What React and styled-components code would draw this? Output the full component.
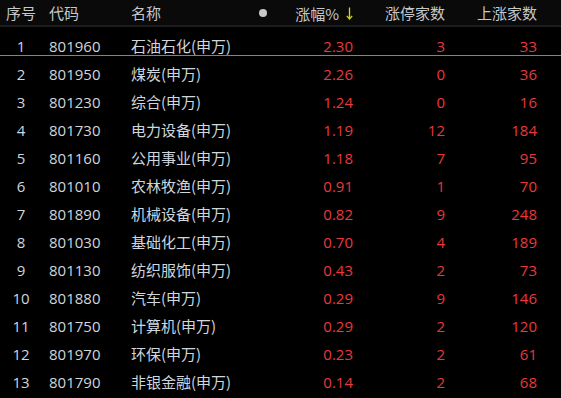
import React from 'react';
import styled, { createGlobalStyle } from 'styled-components'

const GlobalStyle = createGlobalStyle`
  html, body {
    margin: 0;
    padding: 0;
    background: #000;
  }
  body {
    font-family: "Open Sans", "Noto Sans CJK SC", sans-serif;
  }
`;

const rows = [
  ['1', '801960', '石油石化(申万)', '2.30', '3', '33'],
  ['2', '801950', '煤炭(申万)', '2.26', '0', '36'],
  ['3', '801230', '综合(申万)', '1.24', '0', '16'],
  ['4', '801730', '电力设备(申万)', '1.19', '12', '184'],
  ['5', '801160', '公用事业(申万)', '1.18', '7', '95'],
  ['6', '801010', '农林牧渔(申万)', '0.91', '1', '70'],
  ['7', '801890', '机械设备(申万)', '0.82', '9', '248'],
  ['8', '801030', '基础化工(申万)', '0.70', '4', '189'],
  ['9', '801130', '纺织服饰(申万)', '0.43', '2', '73'],
  ['10', '801880', '汽车(申万)', '0.29', '9', '146'],
  ['11', '801750', '计算机(申万)', '0.29', '2', '120'],
  ['12', '801970', '环保(申万)', '0.23', '2', '61'],
  ['13', '801790', '非银金融(申万)', '0.14', '2', '68'],
];

const Table = styled.div`
  width: 561px;
  height: 398px;
  background: #000;
  font-size: 15px;
  overflow: hidden;
`;

// same column grid for the header and every row
const Line = styled.div`
  display: grid;
  grid-template-columns: 42px 89px 128px 9px 85px 92px 92px 1fr;
  align-items: center;
`;

const Header = styled(Line)`
  height: 27px;
  box-sizing: border-box;
  padding-top: 1px;
  background: #0a0a0a;
  border-bottom: 2px solid #1c1c1c;
  color: #c4c8cc;
  font-family: "Noto Sans CJK SC", sans-serif;
`;

const Row = styled(Line)`
  height: ${p => (p.selected ? '29px' : '28px')};
  padding-top: ${p => (p.selected ? '9px' : '8px')};
  box-sizing: border-box;
  border-bottom: ${p => (p.selected ? '1px solid #e8602c' : 'none')};
  color: #cfd6de;
`;

const Cell = styled.div`
  white-space: nowrap;
  line-height: 20px;
  text-align: ${p => p.align || 'left'};
  padding-left: ${p => p.pl || 0}px;
  color: ${p => (p.red ? '#e8383c' : 'inherit')};
`;

const Name = styled(Cell)`
  font-family: "Noto Sans CJK SC", sans-serif;
`;

const Dot = styled.div`
  width: 8px;
  height: 8px;
  border-radius: 50%;
  background: #c8c8c8;
`;

const SortHead = styled.div`
  display: flex;
  justify-content: flex-end;
  align-items: center;
  gap: 7px;
`;

const DownArrow = () => (
  <svg width="7" height="13" viewBox="0 0 7 13">
    <path d="M3.5 0.5 V12 M0.8 8.8 L3.5 12 L6.2 8.8" stroke="#d8d800" strokeWidth="1.3" fill="none" />
  </svg>
);

const App = () => {
  return (
    <Table>
      <GlobalStyle />
      <Header>
        <Cell align="center">序号</Cell>
        <Cell pl={7}>代码</Cell>
        <Cell>名称</Cell>
        <Dot />
        <SortHead>
          <span>涨幅%</span>
          <DownArrow />
        </SortHead>
        <Cell align="right">涨停家数</Cell>
        <Cell align="right">上涨家数</Cell>
        <div />
      </Header>
      {rows.map((r, i) => (
        <Row key={r[1]} selected={i === 0}>
          <Cell align="center">{r[0]}</Cell>
          <Cell pl={7}>{r[1]}</Cell>
          <Name>{r[2]}</Name>
          <div />
          <Cell align="right" red>{r[3]}</Cell>
          <Cell align="right" red>{r[4]}</Cell>
          <Cell align="right" red>{r[5]}</Cell>
          <div />
        </Row>
      ))}
    </Table>
  )
}

export default App;
